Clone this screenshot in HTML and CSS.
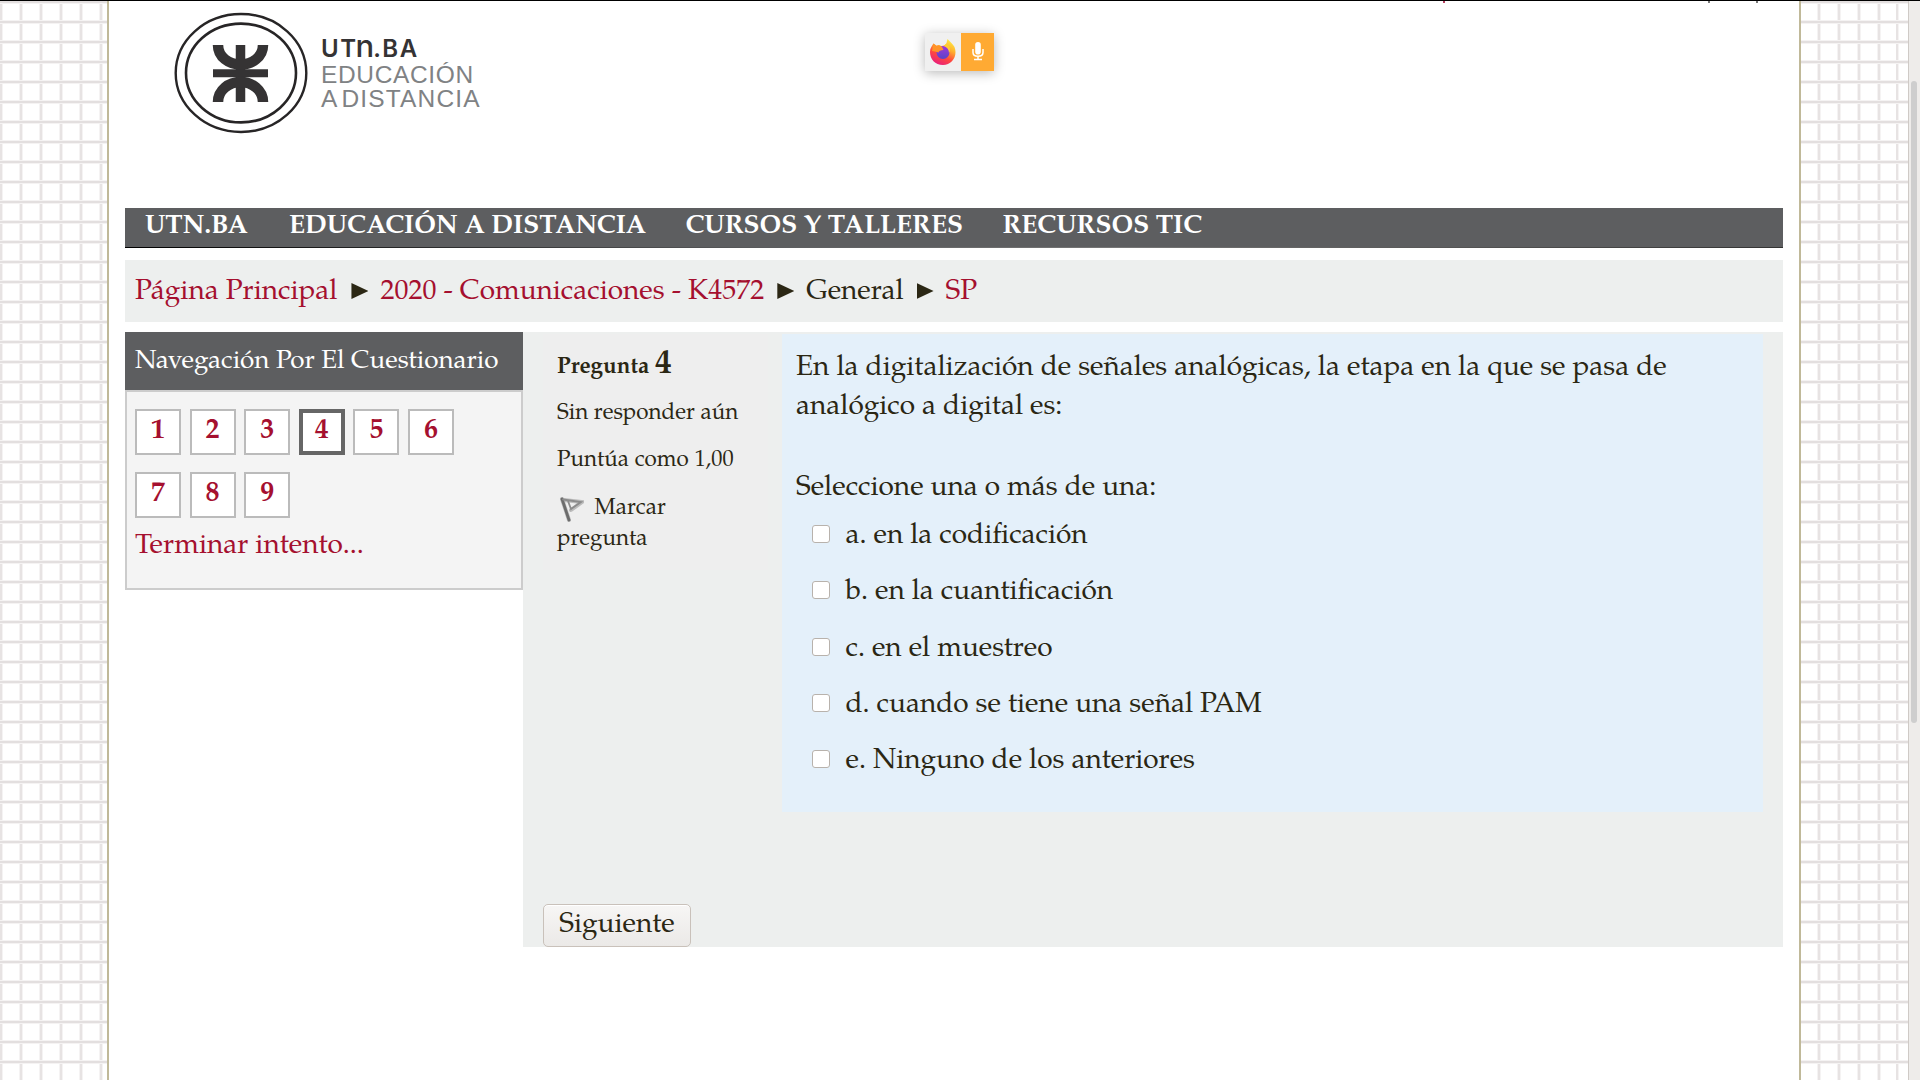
FILE: index.html
```html
<!DOCTYPE html>
<html lang="es">
<head>
<meta charset="utf-8">
<title>SP</title>
<link rel="stylesheet" href="styles.css">
</head>
<body>
<div class="page">
  <header class="header">
    <svg class="seal" viewBox="0 0 136 124" width="136" height="124">
      <g fill="none" stroke="#272526">
        <ellipse cx="68" cy="62" rx="65.3" ry="59" stroke-width="2.4"/>
        <ellipse cx="68" cy="62" rx="55" ry="49.4" stroke-width="2.6"/>
      </g>
      <g fill="none" stroke="#353334">
        <path d="M67.500 34V91" stroke-width="9.500"/>
        <path d="M40 62.200H95" stroke-width="8"/>
        <path d="M45 34C45 46 56 53.500 67.500 53.500S90 46 90 34M45 91C45 79 56 71 67.500 71S90 79 90 91" stroke-width="10.500"/>
      </g>
    </svg>
    <div class="brand">
      <div class="brand-name">UT<span>n</span>.BA</div>
      <div class="brand-edu">EDUCACIÓN</div>
      <div class="brand-dist">A<i></i>DISTANCIA</div>
    </div>
  </header>
  <nav class="menu"><a>UTN.BA</a><a>EDUCACIÓN A DISTANCIA</a><a>CURSOS Y TALLERES</a><a>RECURSOS TIC</a></nav>
  <div class="crumbs">
    <a>Página Principal</a><i class="arrow"></i><a>2020 - Comunicaciones - K4572</a><i class="arrow"></i><span>General</span><i class="arrow"></i><a>SP</a>
  </div>
  <div class="columns">
    <aside class="sidebar">
      <h2>Navegación Por El Cuestionario</h2>
      <div class="block">
        <div class="numbers"><a>1</a><a>2</a><a>3</a><a class="current">4</a><a>5</a><a>6</a><a>7</a><a>8</a><a>9</a></div>
        <a class="finish">Terminar intento...</a>
      </div>
    </aside>
    <main class="content">
      <div class="question">
        <div class="info">
          <h3>Pregunta <b>4</b></h3>
          <p>Sin responder aún</p>
          <p>Puntúa como 1,00</p>
          <div class="flag">
            <svg viewBox="0 0 25 28" width="25" height="28" fill="none" stroke-linecap="round"><g stroke="#bbb" stroke-width="4"><path d="M3 3L10 24M5 4L23 6L12 14"/></g><path d="M3 3L10 24" stroke="#6c6c6c" stroke-width="2.800"/><path d="M4 3.500L22 6L12 13L9 5" stroke="#8c8c8c" stroke-width="1.800"/></svg>
            <span>Marcar</span><br><span>pregunta</span>
          </div>
        </div>
        <div class="formulation">
          <div>En la digitalización de señales analógicas, la etapa en la que se pasa de</div>
          <div>analógico a digital es:</div>
          <div class="prompt">Seleccione una o más de una:</div>
          <label><i></i><span>a. en la codificación</span></label>
          <label><i></i><span>b. en la cuantificación</span></label>
          <label><i></i><span>c. en el muestreo</span></label>
          <label><i></i><span>d. cuando se tiene una señal PAM</span></label>
          <label><i></i><span>e. Ninguno de los anteriores</span></label>
        </div>
      </div>
      <button class="next">Siguiente</button>
    </main>
  </div>
</div>
<div class="topline"></div>
<i class="tail tail-red"></i><i class="tail tail-open"></i><i class="tail tail-close"></i>
<div class="sharing">
  <div class="fx"><svg viewBox="0 0 28 28" width="28" height="28">
    <defs>
      <linearGradient id="fire" x1=".8" y1="0" x2=".3" y2="1"><stop offset="0" stop-color="#fff044"/><stop offset=".35" stop-color="#ffb02c"/><stop offset=".65" stop-color="#ff4a3c"/><stop offset="1" stop-color="#e81d80"/></linearGradient>
      <linearGradient id="globe" x1="0" y1="0" x2="0" y2="1"><stop offset="0" stop-color="#a238d8"/><stop offset="1" stop-color="#5645c8"/></linearGradient>
    </defs>
    <path d="M18.500 1C21 4 24 6 25.500 9C29 18 23 27 14 27C6 27 1 21 1 14C1 10 3 8 4.500 5.500L7 8Q10 6 12 8Q16 8 17.500 5Z" fill="url(#fire)"/>
    <circle cx="14" cy="14.500" r="6.500" fill="url(#globe)"/>
    <path d="M4.500 5.500L8 8Q11 7 13 9L14.500 12Q10 12 9.500 14.500Q6 13 3 13Z" fill="#ff9428"/>
    <path d="M15 8Q20 10 20 15Q22 12 20 8Q18 6 17 6Z" fill="#ffcd35"/>
  </svg></div>
  <div class="mic"><svg viewBox="0 0 12 20" width="12" height="20"><rect x="3.200" y="0" width="5.600" height="12.500" rx="2.800" fill="#fff"/><path d="M1 7V10.500Q1 14.300 6 14.300Q11 14.300 11 10.500V7M6 14.300V17M2 17.500H10" fill="none" stroke="#fff" stroke-width="1.500"/></svg></div>
</div>
<div class="scrollbar"><div></div></div>
</body>
</html>
```
FILE: styles.css
```css
* { box-sizing: border-box; }
html, body { height: 1080px; overflow: hidden; }
body {
  margin: 0;
  color: #2b2714;
  font: 28px/39px "Palatino Linotype", "TeX Gyre Pagella", "Liberation Serif", serif;
  background:
    repeating-linear-gradient(180deg, #f5f3f3 0 1px, #e3dfdf 1px 3px, #f5f3f3 3px 4px, transparent 4px 20px),
    repeating-linear-gradient(90deg, #e7e3e3 0 2px, #f5f3f3 2px 3px, transparent 3px 19px, #f5f3f3 19px 20px) 0 0 / 158px 20px,
    #fff;
  display: flex;
  padding-left: 107px;
}
p, h2, h3 { margin: 0; }
a, label, span, div { white-space: nowrap; }
.page {
  width: 1694px;
  height: 1080px;
  border: solid #c0b999;
  border-width: 0 2px;
  padding: 0 16px;
  background: #fff;
}
.header { height: 208px; display: flex; padding: 11px 0 0 48px; }
.seal { flex: none; }
.brand { padding: 25px 0 0 12px; font-family: "Liberation Sans", sans-serif; color: #808284; }
.brand-name { font: 600 24px/26px Inter, sans-serif; color: #353334; letter-spacing: 1.500px; height: 27px; }
.brand-name span { font-size: 31px; font-weight: 500; line-height: 20px; margin-left: -2px; letter-spacing: -1px; }
.brand-edu { font-size: 24.500px; line-height: 24px; letter-spacing: .650px; }
.brand-dist { font-size: 24.500px; line-height: 24px; letter-spacing: 1.150px; }
.brand-dist i { display: inline-block; width: 3px; }
.menu {
  height: 40px;
  background: linear-gradient(90deg, #000, #5d5e60 40%, #777 60%, #333) bottom / 100% 1px no-repeat, #5d5e60;
  color: #fff;
  font-weight: bold;
  font-size: 26.150px;
  line-height: 38px;
  display: grid;
  grid-template-columns: 144px 396.500px 317px 300px;
  padding-left: 20px;
}
.crumbs {
  margin-top: 12px;
  height: 62px;
  padding-left: 10px;
  background: #edefee;
  line-height: 67px;
  display: flex;
  align-items: flex-start;
}
.crumbs a, .finish, .numbers { color: #a5102f; }
.arrow {
  width: 17px;
  height: 16px;
  margin: 23px 12px 0 13px;
  background: #2b2714;
  clip-path: polygon(0 0, 100% 50%, 0 100%);
}
.crumbs a:first-child { margin-right: 1px; }
.columns { display: flex; margin-top: 10px; }
.sidebar { width: 398px; flex: none; }
.sidebar h2 { height: 58px; background: #5d5e60; color: #fff; font-size: 26px; font-weight: normal; line-height: 61px; padding-left: 10px; }
.block { height: 200px; border: 2px solid #ccc; background: #f4f4f4; padding: 17px 8px 0; }
.numbers { display: grid; grid-template-columns: repeat(6, 46px); column-gap: 8.600px; row-gap: 17px; font-weight: bold; }
.numbers a { height: 46px; border: 2px solid #bbb; background: #fff; text-align: center; line-height: 42px; }
.numbers .current { border: 4px solid #666; line-height: 38px; }
.finish { display: block; margin-top: 10px; line-height: 39px; }
.content { width: 1260px; height: 615px; background: #edefee; padding: 2px 20px 0; }
.question { display: flex; gap: 14px; height: 570px; align-items: flex-start; }
.info { width: 225px; height: 236px; background: #eee; padding: 13px 0 0 14px; font-size: 22.400px; }
.info h3 { height: 48px; font-size: inherit; line-height: 42px; }
.info h3 b { font-size: 33.600px; line-height: 30px; }
.info p { height: 47px; line-height: 38px; }
.flag { line-height: 31px; margin-top: 5px; }
.flag svg { vertical-align: -6px; margin: -4px 5px -4px 2px; }
.formulation { width: 981px; height: 478px; background: #e4f0fa; padding: 16px 0 0 14px; }
.prompt { margin: 42px 0 9px; }
label { display: flex; height: 56.250px; padding-left: 16px; align-items: flex-start; }
label i { width: 18px; height: 18px; border: 1px solid #b8b2ac; border-radius: 3px; background: #fff; margin: 7px 15.500px 0 0; }
.next {
  display: block;
  width: 148px;
  height: 43px;
  padding: 0;
  border: 1px solid #c9c1ba;
  border-radius: 5px;
  background: linear-gradient(#f7f6f5, #ebe9e7);
  box-shadow: inset 0 1px #fff;
  font: inherit;
  line-height: 38px;
  color: inherit;
}
.topline { position: absolute; left: 0; top: 0; width: 1920px; height: 1px; background: #000; }
.tail { position: absolute; top: 1px; width: 2px; height: 2px; background: #777; }
.tail-red { left: 1443px; background: #b84060; }
.tail-open { left: 1708px; }
.tail-close { left: 1756px; }
.sharing { position: absolute; left: 925px; top: 33px; width: 69px; height: 38px; display: flex; box-shadow: 0 2px 12px rgba(0, 0, 0, .28); }
.fx, .mic { display: flex; align-items: center; justify-content: center; }
.fx { width: 36px; background: #f0f0f0; }
.mic { width: 33px; background: #fa3; }
.scrollbar { position: absolute; left: 1908px; top: 1px; width: 12px; height: 1079px; background: #eeecea; border-left: 1px solid #cfcac6; padding: 80px 0 0 2px; }
.scrollbar div { width: 6px; height: 642px; border-radius: 3px; background: #cecece; }
```
